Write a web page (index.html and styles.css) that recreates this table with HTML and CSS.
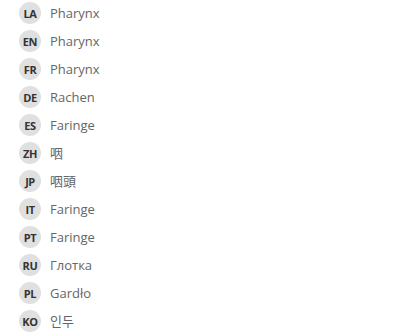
FILE: index.html
```html
<!DOCTYPE html>
<html>
<head>
<meta charset="utf-8">
<link rel="stylesheet" href="styles.css">
</head>
<body>
<ul class="list">
  <li class="row"><span class="badge">LA</span><span class="label">Pharynx</span></li>
  <li class="row"><span class="badge">EN</span><span class="label">Pharynx</span></li>
  <li class="row"><span class="badge">FR</span><span class="label">Pharynx</span></li>
  <li class="row"><span class="badge">DE</span><span class="label">Rachen</span></li>
  <li class="row"><span class="badge">ES</span><span class="label">Faringe</span></li>
  <li class="row"><span class="badge">ZH</span><span class="label">咽</span></li>
  <li class="row"><span class="badge">JP</span><span class="label">咽頭</span></li>
  <li class="row"><span class="badge">IT</span><span class="label">Faringe</span></li>
  <li class="row"><span class="badge">PT</span><span class="label">Faringe</span></li>
  <li class="row"><span class="badge">RU</span><span class="label">Глотка</span></li>
  <li class="row"><span class="badge">PL</span><span class="label">Gardło</span></li>
  <li class="row"><span class="badge">KO</span><span class="label">인두</span></li>
</ul>
</body>
</html>
```
FILE: styles.css
```css
html, body {
  margin: 0;
  padding: 0;
  background: #ffffff;
}
body {
  font-family: "Open Sans", "Noto Sans CJK JP", "Noto Sans CJK KR", sans-serif;
}
.list {
  list-style: none;
  margin: 0;
  padding: 2px 0 0 19px;
  display: flex;
  flex-direction: column;
  gap: 6px;
}
.row {
  display: flex;
  align-items: center;
  gap: 9px;
  height: 22px;
}
.badge {
  width: 22px;
  height: 22px;
  border-radius: 50%;
  background: #e0e0e0;
  color: #333;
  font-size: 11px;
  font-weight: 700;
  display: flex;
  align-items: center;
  justify-content: center;
  letter-spacing: -0.4px;
}
.label {
  font-size: 13px;
  color: #666;
  line-height: 22px;
}
```
